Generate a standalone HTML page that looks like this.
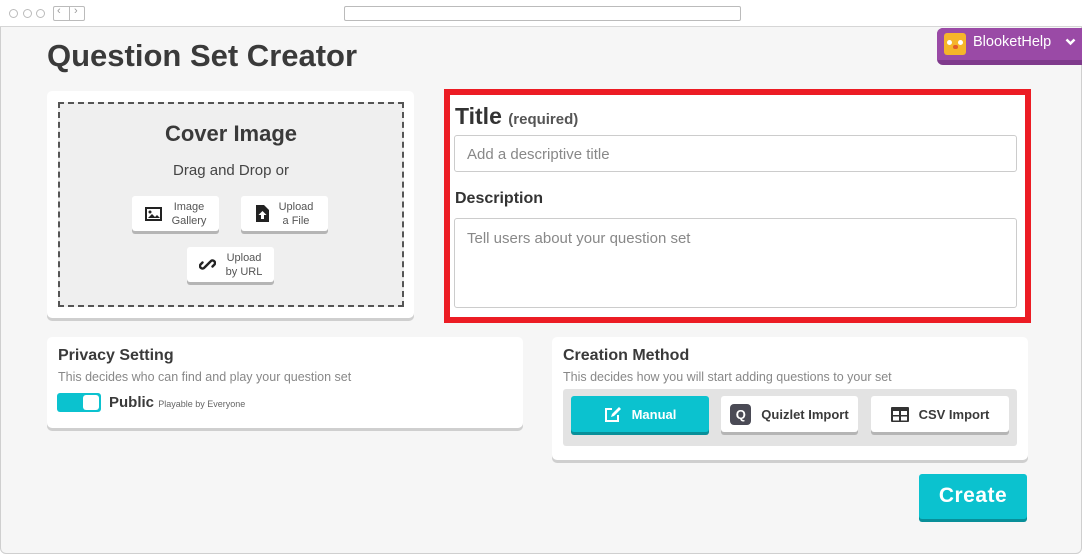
<!DOCTYPE html>
<html><head><style>
*{box-sizing:border-box;margin:0;padding:0}
body{width:1082px;height:554px;overflow:hidden;background:#fff;font-family:"Liberation Sans",sans-serif;position:relative;color:#3a3a3a}
.a{position:absolute}
.frame{left:0;top:0;width:1082px;height:554px;border:1px solid #cfcfcf;border-radius:6px;background:#f6f6f6;overflow:hidden}
.bar{left:0;top:0;width:1082px;height:27px;background:#fff;border-bottom:1px solid #d6d6d6}
.dot{width:9px;height:9px;border:1px solid #bbb;border-radius:50%;top:9px}
.card{background:#fff;border-radius:5px;box-shadow:0 3px 0 #cfcfcf}
.btn{background:#fff;border-radius:3px;box-shadow:0 3px 0 #b5b5b5;font-size:11px;color:#555;text-align:center;line-height:14px;display:flex;align-items:center;justify-content:center;gap:10px}
.mb{background:#fff;border-radius:3px;box-shadow:0 3px 0 #b5b5b5;font-size:13px;font-weight:bold;color:#3a3a3a;display:flex;align-items:center;justify-content:center;gap:10px}
</style></head><body>
<div class="a frame"></div>
<div class="a bar"></div>
<div class="a dot" style="left:9px"></div><div class="a dot" style="left:23px"></div><div class="a dot" style="left:36px"></div>
<div class="a" style="left:53px;top:6px;width:32px;height:15px;border:1px solid #bbb;border-radius:2px"></div>
<div class="a" style="left:69px;top:6px;width:1px;height:15px;background:#bbb"></div>
<div class="a" style="left:57px;top:5px;font-size:11px;color:#999">&lsaquo;</div>
<div class="a" style="left:74px;top:5px;font-size:11px;color:#999">&rsaquo;</div>
<div class="a" style="left:344px;top:6px;width:397px;height:15px;border:1px solid #bbb;border-radius:2px"></div>

<div class="a" style="left:937px;top:28px;width:145px;height:37px;background:#7f3a8c;border-radius:6px 0 0 6px"></div>
<div class="a" style="left:937px;top:28px;width:145px;height:32px;background:#9a4aa6;border-radius:6px 0 0 0"></div>
<div class="a" style="left:944px;top:33px;width:22px;height:22px;background:#f5b52a;border-radius:3px"></div>
<div class="a" style="left:947px;top:40px;width:5px;height:5px;background:#fff;border-radius:50%"></div>
<div class="a" style="left:958px;top:40px;width:5px;height:5px;background:#fff;border-radius:50%"></div>
<div class="a" style="left:953px;top:45px;width:5px;height:4px;background:#e25b2a;border-radius:2px"></div>
<div class="a" style="left:973px;top:34px;font-size:14.5px;color:#fff">BlooketHelp</div>
<svg class="a" style="left:1065px;top:38px" width="11" height="8" viewBox="0 0 11 8"><path d="M1.5 1.5l4 4 4-4" fill="none" stroke="#fff" stroke-width="2.5"/></svg>

<div class="a" style="left:47px;top:38px;font-size:31px;font-weight:bold;color:#3a3a3a">Question Set Creator</div>

<div class="a card" style="left:47px;top:91px;width:367px;height:227px"></div>
<div class="a" style="left:58px;top:102px;width:346px;height:205px;background:#efefef;border:2px dashed #555"></div>
<div class="a" style="left:58px;top:121px;width:346px;text-align:center;font-size:22px;font-weight:bold;color:#3a3a3a">Cover Image</div>
<div class="a" style="left:58px;top:162px;width:346px;text-align:center;font-size:15px;color:#444">Drag and Drop or</div>
<div class="a btn" style="left:132px;top:196px;width:87px;height:35px">
<svg width="17" height="14" viewBox="0 0 17 14"><rect x="1" y="1" width="15" height="12" fill="none" stroke="#222" stroke-width="2"/><path d="M3 11l4-4 3 3 2-2 3 3z" fill="#222"/><circle cx="5" cy="5" r="1.5" fill="#222"/></svg><span>Image<br>Gallery</span></div>
<div class="a btn" style="left:241px;top:196px;width:87px;height:35px">
<svg width="13" height="17" viewBox="0 0 13 17"><path d="M0 0h8l5 5v12H0z" fill="#222"/><path d="M6.5 6l-4 4h2.5v4h3v-4h2.5z" fill="#fff"/></svg><span>Upload<br>a File</span></div>
<div class="a btn" style="left:187px;top:247px;width:87px;height:35px">
<svg width="17" height="17" viewBox="0 0 17 17"><path d="M7 10l-2 2a2.5 2.5 0 01-3.5-3.5l2-2M10 7l2-2a2.5 2.5 0 013.5 3.5l-2 2M6 11l5-5" fill="none" stroke="#222" stroke-width="2.4" stroke-linecap="round"/></svg><span>Upload<br>by URL</span></div>

<div class="a" style="left:444px;top:89px;width:587px;height:234px;background:#fff;border:6px solid #ec1c24"></div>
<div class="a" style="left:455px;top:103px;font-size:23px;font-weight:bold;color:#333">Title <span style="font-size:15px;color:#555">(required)</span></div>
<div class="a" style="left:454px;top:135px;width:563px;height:37px;border:1px solid #ccc;border-radius:3px;font-size:15px;color:#888;padding:10px 12px">Add a descriptive title</div>
<div class="a" style="left:455px;top:190px;font-size:16px;font-weight:bold;color:#333">Description</div>
<div class="a" style="left:454px;top:218px;width:563px;height:90px;border:1px solid #ccc;border-radius:3px;font-size:15px;color:#888;padding:11px 12px">Tell users about your question set</div>

<div class="a card" style="left:47px;top:337px;width:476px;height:91px"></div>
<div class="a" style="left:58px;top:347px;font-size:16px;font-weight:bold">Privacy Setting</div>
<div class="a" style="left:58px;top:370px;font-size:12.5px;color:#888">This decides who can find and play your question set</div>
<div class="a" style="left:57px;top:393px;width:44px;height:19px;background:#0bc2cf;border-radius:3px"></div>
<div class="a" style="left:83px;top:395px;width:16px;height:15px;background:#fff;border-radius:3px"></div>
<div class="a" style="left:109px;top:394px;font-size:15px;font-weight:bold">Public <span style="font-size:9px;font-weight:normal;color:#666">Playable by Everyone</span></div>

<div class="a card" style="left:552px;top:337px;width:476px;height:123px"></div>
<div class="a" style="left:563px;top:347px;font-size:16px;font-weight:bold">Creation Method</div>
<div class="a" style="left:563px;top:370px;font-size:12.5px;color:#888">This decides how you will start adding questions to your set</div>
<div class="a" style="left:563px;top:389px;width:454px;height:57px;background:#e3e3e3;border-radius:3px"></div>
<div class="a mb" style="left:571px;top:396px;width:138px;height:36px;background:#0bc2cf;color:#fff;box-shadow:0 3px 0 #088f99">
<svg width="18" height="17" viewBox="0 0 18 17"><path d="M8 3H2v12h12V9" fill="none" stroke="#fff" stroke-width="2"/><path d="M7 11l1-3 7-7 2 2-7 7z" fill="#fff"/></svg>Manual</div>
<div class="a mb" style="left:721px;top:396px;width:137px;height:36px">
<span style="width:21px;height:21px;background:#4a4a55;border-radius:4px;color:#fff;font-size:13px;display:flex;align-items:center;justify-content:center">Q</span>Quizlet Import</div>
<div class="a mb" style="left:871px;top:396px;width:138px;height:36px">
<svg width="18" height="15" viewBox="0 0 18 15"><rect x="0" y="0" width="18" height="15" rx="1" fill="#333"/><rect x="2" y="4" width="6" height="4" fill="#fff"/><rect x="10" y="4" width="6" height="4" fill="#fff"/><rect x="2" y="9.5" width="6" height="4" fill="#fff"/><rect x="10" y="9.5" width="6" height="4" fill="#fff"/></svg>CSV Import</div>

<div class="a" style="left:919px;top:474px;width:108px;height:45px;background:#0bc2cf;border-radius:3px;box-shadow:0 3px 0 #088f99;color:#fff;font-size:21px;font-weight:bold;text-align:center;line-height:44px;letter-spacing:0.5px">Create</div>
</body></html>
